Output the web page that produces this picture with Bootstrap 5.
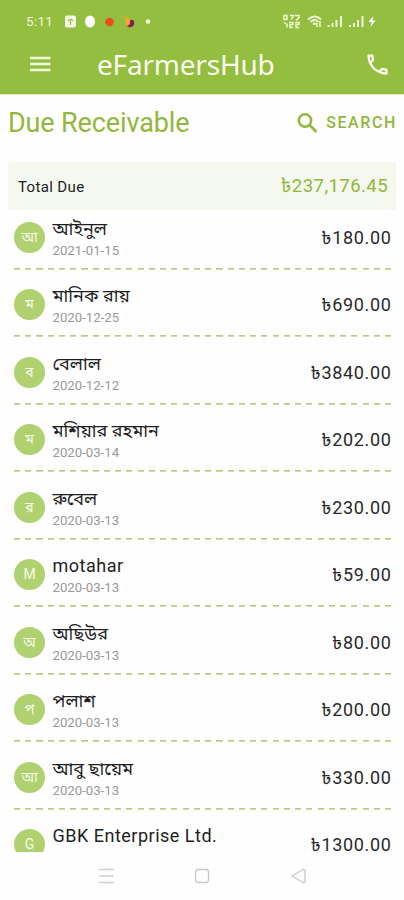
<!DOCTYPE html>
<html lang="bn">
<head>
<meta charset="utf-8">
<meta name="viewport" content="width=device-width, initial-scale=1">
<title>eFarmersHub</title>
<link href="https://cdn.jsdelivr.net/npm/bootstrap@5.3.0/dist/css/bootstrap.min.css" rel="stylesheet">
<style>
body{font-family:Roboto,"Noto Sans Bengali","Noto Sans",sans-serif;background:#fefefe;height:900px;color:#222}
svg{display:block;flex:none}
.topbar{height:95px;background:#94be40;border-bottom:1px solid #d9eab9;color:#fbfdf0}
.status{height:42px;padding:0 25px 0 26px}
.clock{font-size:13.5px;letter-spacing:.3px;color:#f0f7d9;width:38px}
.appbar{height:44px;padding:0 13px 0 30px}
.brand{font:400 28px/40px "Noto Sans",sans-serif;margin-left:46px;letter-spacing:-.2px}
.heading{height:67px;padding:0 7px 11px 8px}
.heading h1{font-size:27px;color:#92b73c;letter-spacing:-.13px;line-height:32px}
.find{color:#92b73c;font-weight:500;font-size:16px;letter-spacing:1.6px}
.total{height:47.5px;margin:0 8px;padding:3px 8px 0 10px;background:#f4f8ef;border-radius:3px;font-size:15px;letter-spacing:.35px}
.total .sum{font-size:18.6px;color:#92b73c;letter-spacing:.4px}
.list{height:642px}
.entry{height:67.5px;margin:0 13px 0 14px;padding-bottom:7px;flex:none;
 background:repeating-linear-gradient(90deg,#b7cb83 0 6px,transparent 6px 11.25px) 0 calc(100% - 7.500px)/100% 1.700px no-repeat}
.avatar{width:31px;height:31px;border-radius:50%;background:#afd170;color:#f8fce9;font-size:14px;margin-top:12px;flex:none}
.who{margin-left:7.5px;padding-top:6px;height:60px}
.name{font-size:18px;line-height:26px;height:26px;white-space:nowrap;color:#1e1e1e}
.latin{letter-spacing:.5px}
.date{font-size:13.2px;line-height:17px;color:#999}
.amt{font-size:18px;letter-spacing:.65px;margin-right:-.5px;margin-top:21px;line-height:14px;height:14px;color:#292929}
.sysnav{height:48px;padding:0 96px}
</style>
<script src="https://cdn.jsdelivr.net/npm/bootstrap@5.3.0/dist/js/bootstrap.bundle.min.js"></script>
</head>
<body class="d-flex flex-column overflow-hidden m-0">
<header class="topbar flex-shrink-0">
 <div class="status d-flex align-items-center justify-content-between">
  <div class="d-flex align-items-center"><span class="clock">5:11</span>
   <svg width="92" height="16" viewBox="0 0 92 16"><rect x="1" y="2.5" width="11" height="12" rx="2" fill="#f6faea"/><path d="M4 8q2.500-3 5 0M6.500 8v4" fill="none" stroke="#94be40" stroke-width="1.300"/><ellipse cx="26" cy="8.500" rx="5" ry="6" fill="#fff"/><circle cx="45.500" cy="9" r="4.200" fill="#ee4c1c"/><path d="M61 3l8 5-7 5z" fill="#f5a52a"/><path d="M69 7a4 4 0 0 1-6 6q4-1 3-6z" fill="#8a1c55"/><circle cx="84" cy="8.500" r="2.300" fill="#f6faea"/></svg>
  </div>
  <svg width="98" height="16" viewBox="0 0 98 16" fill="none" stroke="#edf5d5" stroke-width="1.500"><path d="M3 2.500h3v4H3zM9 2.500h3.500l-2 4M14 2.500h4v2l-3 3M3 9.500l3 2v3M8 9.500h4v2H9v3h3M14 9.500h4v2h-3v3h3"/><path d="M27 6.500q7-6 13 0M29.500 9q4-4 8 0M32 11.500q2-2 3 0" stroke-width="1.800"/><path d="M39 8v6M36 10v4"/><g stroke-width="2"><path d="M47.500 12v2M51.500 10v4M55.500 7v7M60 3v11M69 12v2M73 10v4M77 7v7M81.500 3v11"/></g><path d="M92.500 3l-5 6h3l-1 5 5-6.500h-3z" fill="#fff" stroke="none"/></svg>
 </div>
 <div class="appbar d-flex align-items-center">
  <svg width="21" height="16" viewBox="0 0 21 16"><path d="M0 2h20.500M0 8h20.500M0 14h20.500" stroke="#f4fae0" stroke-width="2.300"/></svg>
  <span class="brand">eFarmersHub</span>
  <svg class="ms-auto" width="27" height="27" viewBox="0 0 24 24" fill="#fbfef0"><path d="M6.540 5c.060.890.210 1.760.450 2.590l-1.200 1.200c-.410-1.200-.670-2.470-.760-3.790h1.510m9.860 12.020c.850.240 1.720.390 2.600.450v1.490c-1.320-.090-2.590-.350-3.800-.750l1.200-1.190M7.500 3H4c-.550 0-1 .450-1 1 0 9.390 7.610 17 17 17 .550 0 1-.450 1-1v-3.490c0-.550-.450-1-1-1-1.240 0-2.450-.200-3.570-.570a1.020 1.020 0 0 0-1.020.240l-2.200 2.200a15.150 15.150 0 0 1-6.590-6.590l2.200-2.200c.280-.280.360-.670.250-1.020A11.360 11.360 0 0 1 8.500 4c0-.550-.450-1-1-1z"/></svg>
 </div>
</header>
<section class="heading d-flex align-items-center flex-shrink-0">
 <h1 class="fw-normal m-0">Due Receivable</h1>
 <div class="find ms-auto d-flex align-items-center"><svg class="me-2" width="21" height="21" viewBox="0 0 21 21" fill="none" stroke="#92b73c" stroke-width="2.500"><circle cx="8" cy="7.500" r="6.200"/><path d="M12.500 12l7 7"/></svg><span>SEARCH</span></div>
</section>
<section class="total d-flex align-items-center justify-content-between flex-shrink-0"><span>Total Due</span><span class="sum">৳237,176.45</span></section>
<main class="list d-flex flex-column overflow-hidden flex-shrink-0">
 <div class="entry d-flex"><div class="avatar d-flex align-items-center justify-content-center">আ</div><div class="who"><div class="name">আইনুল</div><div class="date">2021-01-15</div></div><div class="amt ms-auto">৳180.00</div></div>
 <div class="entry d-flex"><div class="avatar d-flex align-items-center justify-content-center">ম</div><div class="who"><div class="name">মানিক রায়</div><div class="date">2020-12-25</div></div><div class="amt ms-auto">৳690.00</div></div>
 <div class="entry d-flex"><div class="avatar d-flex align-items-center justify-content-center">ব</div><div class="who"><div class="name">বেলাল</div><div class="date">2020-12-12</div></div><div class="amt ms-auto">৳3840.00</div></div>
 <div class="entry d-flex"><div class="avatar d-flex align-items-center justify-content-center">ম</div><div class="who"><div class="name">মশিয়ার রহমান</div><div class="date">2020-03-14</div></div><div class="amt ms-auto">৳202.00</div></div>
 <div class="entry d-flex"><div class="avatar d-flex align-items-center justify-content-center">র</div><div class="who"><div class="name">রুবেল</div><div class="date">2020-03-13</div></div><div class="amt ms-auto">৳230.00</div></div>
 <div class="entry d-flex"><div class="avatar d-flex align-items-center justify-content-center">M</div><div class="who"><div class="name latin">motahar</div><div class="date">2020-03-13</div></div><div class="amt ms-auto">৳59.00</div></div>
 <div class="entry d-flex"><div class="avatar d-flex align-items-center justify-content-center">অ</div><div class="who"><div class="name">অছিউর</div><div class="date">2020-03-13</div></div><div class="amt ms-auto">৳80.00</div></div>
 <div class="entry d-flex"><div class="avatar d-flex align-items-center justify-content-center">প</div><div class="who"><div class="name">পলাশ</div><div class="date">2020-03-13</div></div><div class="amt ms-auto">৳200.00</div></div>
 <div class="entry d-flex"><div class="avatar d-flex align-items-center justify-content-center">আ</div><div class="who"><div class="name">আবু ছায়েম</div><div class="date">2020-03-13</div></div><div class="amt ms-auto">৳330.00</div></div>
 <div class="entry d-flex"><div class="avatar d-flex align-items-center justify-content-center">G</div><div class="who"><div class="name latin">GBK Enterprise Ltd.</div></div><div class="amt ms-auto">৳1300.00</div></div>
</main>
<nav class="sysnav d-flex align-items-center justify-content-between">
 <svg width="20" height="16" viewBox="0 0 20 16"><path d="M3 1.500h15M3 8h15M3 14.500h15" stroke="#d2d2d2" stroke-width="1.400"/></svg>
 <svg width="16" height="16" viewBox="0 0 16 16"><rect x="1.500" y="1.500" width="13" height="13" rx="2.500" fill="none" stroke="#c6c6c6" stroke-width="1.300"/></svg>
 <svg width="20" height="16" viewBox="0 0 20 16"><path d="M4 8L15 1.500Q17 1 17 3v10q0 2-2 1.500z" fill="none" stroke="#c9c9c9" stroke-width="1.300" stroke-linejoin="round"/></svg>
</nav>
</body>
</html>
